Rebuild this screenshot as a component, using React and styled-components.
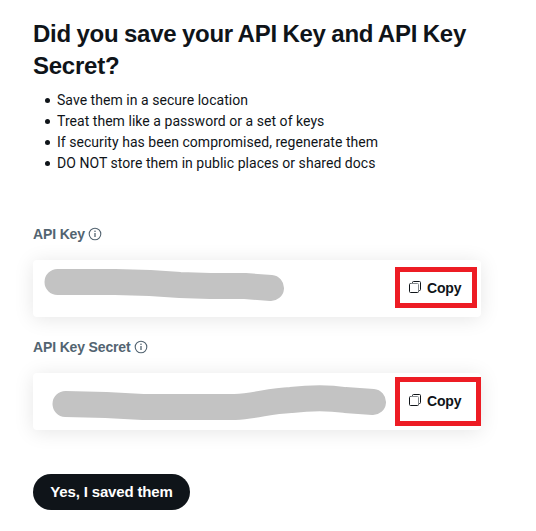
import React from "react";
import styled, { createGlobalStyle } from "styled-components";

const GlobalStyle = createGlobalStyle`
  body {
    margin: 0;
    background: #fff;
    color: #0f1419;
    font-family: Roboto, "Liberation Sans", sans-serif;
  }
`;

const Page = styled.main`
  box-sizing: border-box;
  width: 536px;
  height: 531px;
  padding: 18px 55px 0 33px;
  overflow: hidden;
`;

const Title = styled.h1`
  margin: 0;
  font-family: "Liberation Sans", sans-serif;
  font-size: 24px;
  font-weight: 700;
  letter-spacing: -0.25px;
  word-spacing: -0.85px;
  line-height: 32px;
  white-space: nowrap;
`;

const TipList = styled.ul`
  margin: 7px 0 0;
  padding: 0;
  list-style: none;
`;

const Tip = styled.li`
  display: flex;
  align-items: center;
  height: 21px;
  font-size: 14px;
  letter-spacing: 0.04px;
  white-space: nowrap;

  &::before {
    content: "";
    width: 5px;
    height: 5px;
    margin: 1px 7px 0 12px;
    border-radius: 50%;
    background: #0f1419;
  }
`;

const Field = styled.section`
  margin-top: ${props => props.$gap}px;
`;

const Label = styled.div`
  display: flex;
  align-items: center;
  gap: 3px;
  height: 20px;
  color: #536471;
  font-family: "Liberation Sans", sans-serif;
  font-size: 14px;
  font-weight: 700;
  letter-spacing: -0.15px;
`;

const KeyCard = styled.div`
  display: flex;
  justify-content: space-between;
  align-items: flex-start;
  height: 57px;
  margin-top: 16px;
  border-radius: 4px;
  background: #fff;
  box-shadow: 0 2px 20px rgba(0, 0, 0, 0.1);
`;

const Scribble = styled.svg`
  display: block;
  width: 360px;
  height: 57px;
`;

const CopyButton = styled.button`
  box-sizing: border-box;
  display: flex;
  align-items: flex-start;
  gap: 5px;
  width: ${props => props.$width}px;
  height: ${props => props.$height}px;
  margin: ${props => props.$margin};
  padding: ${props => props.$top}px 0 0 8px;
  border: 5px solid #ed1c24;
  background: #fff;
  color: #0f1419;
  font-family: "Liberation Sans", sans-serif;
  font-size: 14px;
  font-weight: 700;
  letter-spacing: -0.15px;
  line-height: 20px;
  cursor: pointer;
`;

const CopyGlyph = styled.svg`
  width: 14px;
  height: 14px;
  margin-top: 2px;
`;

const SavedButton = styled.button`
  width: 157px;
  height: 36px;
  margin-top: 44px;
  padding: 0 0 2px;
  border: none;
  border-radius: 18px;
  background: #0f1419;
  color: #fff;
  font-family: "Liberation Sans", sans-serif;
  font-size: 15px;
  font-weight: 700;
  letter-spacing: -0.15px;
  cursor: pointer;
`;

const tips = [
  "Save them in a secure location",
  "Treat them like a password or a set of keys",
  "If security has been compromised, regenerate them",
  "DO NOT store them in public places or shared docs",
];

const fields = [
  {
    label: "API Key",
    gap: 51,
    path: "M24.5 22H82L117 23L147 25L177 26H212L238 28",
    copy: { $width: 82, $height: 41, $margin: "7px 4px 0 0", $top: 6 },
  },
  {
    label: "API Key Secret",
    gap: 20,
    path: "M32.5 31L73 32L110 34H202C224 33 235 28 258 27C276 25 298 25 312 27L340 29",
    copy: { $width: 86, $height: 49, $margin: "4px 0 0", $top: 9 },
  },
];

const InfoIcon = () => (
  <svg width="14" height="14" viewBox="0 0 14 14" fill="none" stroke="currentColor">
    <circle cx="7" cy="7" r="5.8" strokeWidth="1.1" />
    <path d="M7 6V10" strokeWidth="1.3" />
    <circle cx="7" cy="4.3" r="0.8" fill="currentColor" stroke="none" />
  </svg>
);

const CopyIcon = () => (
  <CopyGlyph viewBox="0 0 14 14" fill="none" stroke="#0f1419">
    <path d="M4.5 3V2.5Q4.5 1.5 5.5 1.5H11.5Q12.5 1.5 12.5 2.5V9.5Q12.5 10.5 11.5 10.5H11" />
    <path d="M2.5 3.5H9.5Q10.5 3.5 10.5 4.5V11.5" stroke="#858a8e" />
    <path d="M2.5 3.5Q1.5 3.5 1.5 4.5V11.5Q1.5 12.5 2.5 12.5H9.5Q10.5 12.5 10.5 11.5" />
  </CopyGlyph>
);

const App = () => {
  return (
    <Page>
      <GlobalStyle />
      <Title>
        Did you save your API Key and API Key
        <br />
        Secret?
      </Title>
      <TipList>
        {tips.map(tip => (
          <Tip key={tip}>{tip}</Tip>
        ))}
      </TipList>
      {fields.map(field => (
        <Field key={field.label} $gap={field.gap}>
          <Label>
            {field.label}
            <InfoIcon />
          </Label>
          <KeyCard>
            <Scribble viewBox="0 0 360 57">
              <path
                d={field.path}
                fill="none"
                stroke="#c3c3c3"
                strokeWidth="26"
                strokeLinecap="round"
                strokeLinejoin="round"
              />
            </Scribble>
            <CopyButton {...field.copy}>
              <CopyIcon />
              Copy
            </CopyButton>
          </KeyCard>
        </Field>
      ))}
      <SavedButton>Yes, I saved them</SavedButton>
    </Page>
  );
};

export default App;
